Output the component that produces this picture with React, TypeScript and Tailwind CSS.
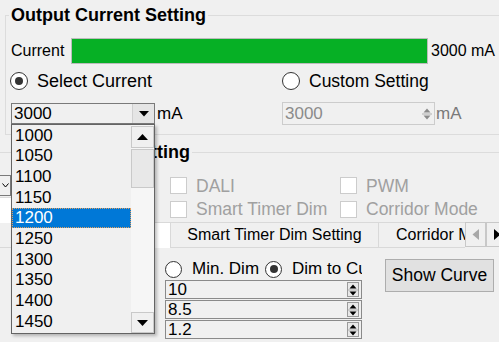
import React from "react";

function Radio({ checked, big }: { checked?: boolean; big?: boolean }) {
  return (
    <span
      className={`${big ? "w-[18px] h-[18px]" : "w-[17px] h-[17px]"} shrink-0 rounded-full border border-[#333333] bg-white flex items-center justify-center`}
    >
      {checked && <span className="w-[8px] h-[8px] rounded-full bg-[#333333]" />}
    </span>
  );
}

function Check({ label }: { label: string }) {
  return (
    <div className="h-[21px] flex items-center whitespace-nowrap">
      <span className="w-[17px] h-[17px] shrink-0 border border-[#cccccc] bg-white" />
      <span className="ml-[9px] text-[17.5px] leading-[20px] text-[#a0a0a0]">{label}</span>
    </div>
  );
}

function UpDown({ color }: { color: string }) {
  return (
    <svg width="10" height="16" viewBox="0 0 10 16">
      <path d="M5 2.5 L8.5 6.5 H1.5 Z" fill={color} />
      <line x1="0" y1="8" x2="10" y2="8" stroke="#b0b0b0" strokeWidth="1" />
      <path d="M5 13.5 L8.5 9.5 H1.5 Z" fill={color} />
    </svg>
  );
}

function SpinRow({ value }: { value: string }) {
  return (
    <div className="h-[19px] w-[197px] border border-[#8a8a8a] flex items-center">
      <span className="flex-1 pl-[2px] text-[17px] leading-[17px]">{value}</span>
      <span className="mr-[2px] w-[12px] h-[15px] border border-[#9a9a9a] bg-[#e8e8e8] flex items-center justify-center">
        <UpDown color="#000000" />
      </span>
    </div>
  );
}

export default function App() {
  const items = ["1000", "1050", "1100", "1150", "1200", "1250", "1300", "1350", "1400", "1450"];
  return (
    <div className="relative w-[499px] h-[342px] overflow-hidden bg-[#f0f0f0] text-black font-['Liberation_Sans',Arial,sans-serif]">
      {/* Group 1 */}
      <fieldset className="ml-[5px] mt-[5px] w-[520px] h-[130px] border border-[#dcdcdc]">
        <legend className="ml-[3px] px-[2px] text-[18px] font-bold leading-[20px]">Output Current Setting</legend>
        <div className="pl-[5px]">
          <div className="mt-[13px] flex items-center h-[26px]">
            <span className="w-[60px] text-[16px] leading-[20px]">Current</span>
            <div className="w-[357px] h-[26px] border border-[#bcbcbc] bg-[#e6e6e6]">
              <div className="h-full w-full bg-[#06b025]" />
            </div>
            <span className="ml-[3px] text-[16px] leading-[20px] whitespace-nowrap">3000 mA</span>
          </div>
          <div className="mt-[7px] flex items-center h-[20px]">
            <div className="w-[271px] flex items-center">
              <span className="ml-[-1px]">
                <Radio checked big />
              </span>
              <span className="ml-[9px] text-[18px] leading-[20px] whitespace-nowrap">Select Current</span>
            </div>
            <div className="flex items-center">
              <Radio big />
              <span className="ml-[9px] text-[17.5px] leading-[20px] whitespace-nowrap">Custom Setting</span>
            </div>
          </div>
          <div className="mt-[11px] flex items-center h-[23px]">
            <div className="w-[271px] flex items-center">
              <div className="w-[144px] h-[21px] border border-[#7a7a7a] bg-[#f0f0f0] flex items-center">
                <span className="flex-1 pl-[2px] text-[17px] leading-[19px]">3000</span>
                <span className="w-[22px] h-[19px] bg-[#e5e5e5] border-l border-[#d0d0d0] flex items-center justify-center">
                  <svg width="10" height="6" viewBox="0 0 10 6">
                    <path d="M0 0 H10 L5 5.5 Z" fill="#000" />
                  </svg>
                </span>
              </div>
              <span className="ml-[2px] text-[17px] leading-[20px]">mA</span>
            </div>
            <div className="flex items-center">
              <div className="w-[153px] h-[23px] border border-[#cccccc] flex items-center">
                <span className="flex-1 pl-[2px] text-[17px] leading-[20px] text-[#8b8b8b]">3000</span>
                <span className="mr-[2px] w-[11px] h-[18px] flex items-center justify-center">
                  <UpDown color="#8b8b8b" />
                </span>
              </div>
              <span className="ml-[1px] text-[17px] leading-[20px] text-[#7a7a7a]">mA</span>
            </div>
          </div>
        </div>
      </fieldset>

      {/* Group 2 */}
      <fieldset className="mt-[7px] w-[520px] h-[210px] border border-l-0 border-[#dcdcdc]">
        <legend className="ml-[45px] px-[2px] text-[18px] font-bold leading-[20px]">Dimming Setting</legend>
        <div className="flex h-[60px]">
          <div className="w-[170px]">
            <div className="mt-[13px] ml-[-30px] w-[41px] h-[21px] border border-[#7a7a7a] bg-[#f0f0f0] flex items-center justify-end pr-[1px]">
              <svg width="7" height="5" viewBox="0 0 7 5">
                <path d="M0.5 0.5 L3.5 4 L6.5 0.5" stroke="#000" strokeWidth="1" fill="none" />
              </svg>
            </div>
            <div className="mt-[1px] ml-[-30px] w-[41px] h-[26px] bg-white border-t border-[#dcdcdc]" />
          </div>
          <div className="mt-[13px] grid grid-cols-[170px_170px]">
            <Check label="DALI" />
            <Check label="PWM" />
            <Check label="Smart Timer Dim" />
            <Check label="Corridor Mode" />
          </div>
        </div>

        {/* Tabs */}
        <div className="flex h-[26px]">
          <div className="w-[465px] overflow-hidden flex">
            <div className="w-[120px] shrink-0 border-b border-[#d9d9d9]" />
            <div className="w-[51px] shrink-0 h-[26px] bg-white border-x border-t border-[#d9d9d9]" />
            <div className="w-[208px] shrink-0 h-[26px] border-t border-r border-b border-[#d9d9d9] flex items-center justify-center text-[16px] whitespace-nowrap">
              Smart Timer Dim Setting
            </div>
            <div className="w-[160px] shrink-0 h-[26px] border-t border-r border-b border-[#d9d9d9] flex items-center pl-[17px] text-[16px] whitespace-nowrap">
              Corridor Mode Setting
            </div>
          </div>
          <div className="w-[21px] h-[25px] shrink-0 border border-[#c8c8c8] bg-[#f0f0f0] flex items-center justify-center">
            <svg width="8" height="11" viewBox="0 0 8 11">
              <path d="M7 0 V11 L0.5 5.5 Z" fill="#a8a8a8" />
            </svg>
          </div>
          <div className="w-[21px] h-[25px] shrink-0 border border-[#c8c8c8] bg-[#f0f0f0] flex items-center justify-center">
            <svg width="8" height="11" viewBox="0 0 8 11">
              <path d="M1 0 V11 L7.5 5.5 Z" fill="#000" />
            </svg>
          </div>
        </div>

        {/* Tab page */}
        <div className="flex pl-[165px]">
          <div className="w-[197px] overflow-hidden mt-[11px]">
            <div className="h-[20px] flex items-center whitespace-nowrap">
              <Radio />
              <span className="ml-[10px] text-[17px] leading-[20px]">Min. Dim</span>
              <span className="ml-[6px]">
                <Radio checked />
              </span>
              <span className="ml-[10px] text-[17px] leading-[20px]">Dim to Curve</span>
            </div>
            <div className="mt-[1px] flex flex-col gap-[1px]">
              <SpinRow value="10" />
              <SpinRow value="8.5" />
              <SpinRow value="1.2" />
            </div>
          </div>
          <div className="ml-[23px] mt-[11px] w-[109px] h-[33px] border border-[#adadad] bg-[#e1e1e1] flex items-center justify-center text-[17.5px] whitespace-nowrap">
            Show Curve
          </div>
        </div>
      </fieldset>

      {/* Open dropdown list (overlay) */}
      <div className="absolute left-[11px] top-[124px] w-[144px] h-[210px] border border-[#646464] bg-[#f0f0f0] flex shadow-[2px_2px_3px_rgba(0,0,0,0.25)]">
        <div className="w-[119px] flex flex-col">
          {items.map((it) => (
            <div
              key={it}
              className={
                it === "1200"
                  ? "h-[20.7px] pl-[3px] flex items-center text-[17px] bg-[#0078d7] text-white outline-1 outline-dotted outline-offset-[-1px] outline-[#e0a060]"
                  : "h-[20.7px] pl-[3px] flex items-center text-[17px]"
              }
            >
              {it}
            </div>
          ))}
        </div>
        <div className="w-[23px] flex flex-col bg-[#f6f6f6]">
          <div className="h-[22px] mt-[1px] border border-[#c9c9c9] bg-[#f0f0f0] flex items-center justify-center">
            <svg width="11" height="6" viewBox="0 0 11 6">
              <path d="M5.5 0 L11 6 H0 Z" fill="#000" />
            </svg>
          </div>
          <div className="h-[39px] mt-[1px] border border-[#c9c9c9] bg-[#e8e8e8]" />
          <div className="flex-1" />
          <div className="h-[21px] border border-[#c9c9c9] bg-[#f0f0f0] flex items-center justify-center">
            <svg width="11" height="6" viewBox="0 0 11 6">
              <path d="M0 0 H11 L5.5 6 Z" fill="#000" />
            </svg>
          </div>
        </div>
      </div>
    </div>
  );
}
